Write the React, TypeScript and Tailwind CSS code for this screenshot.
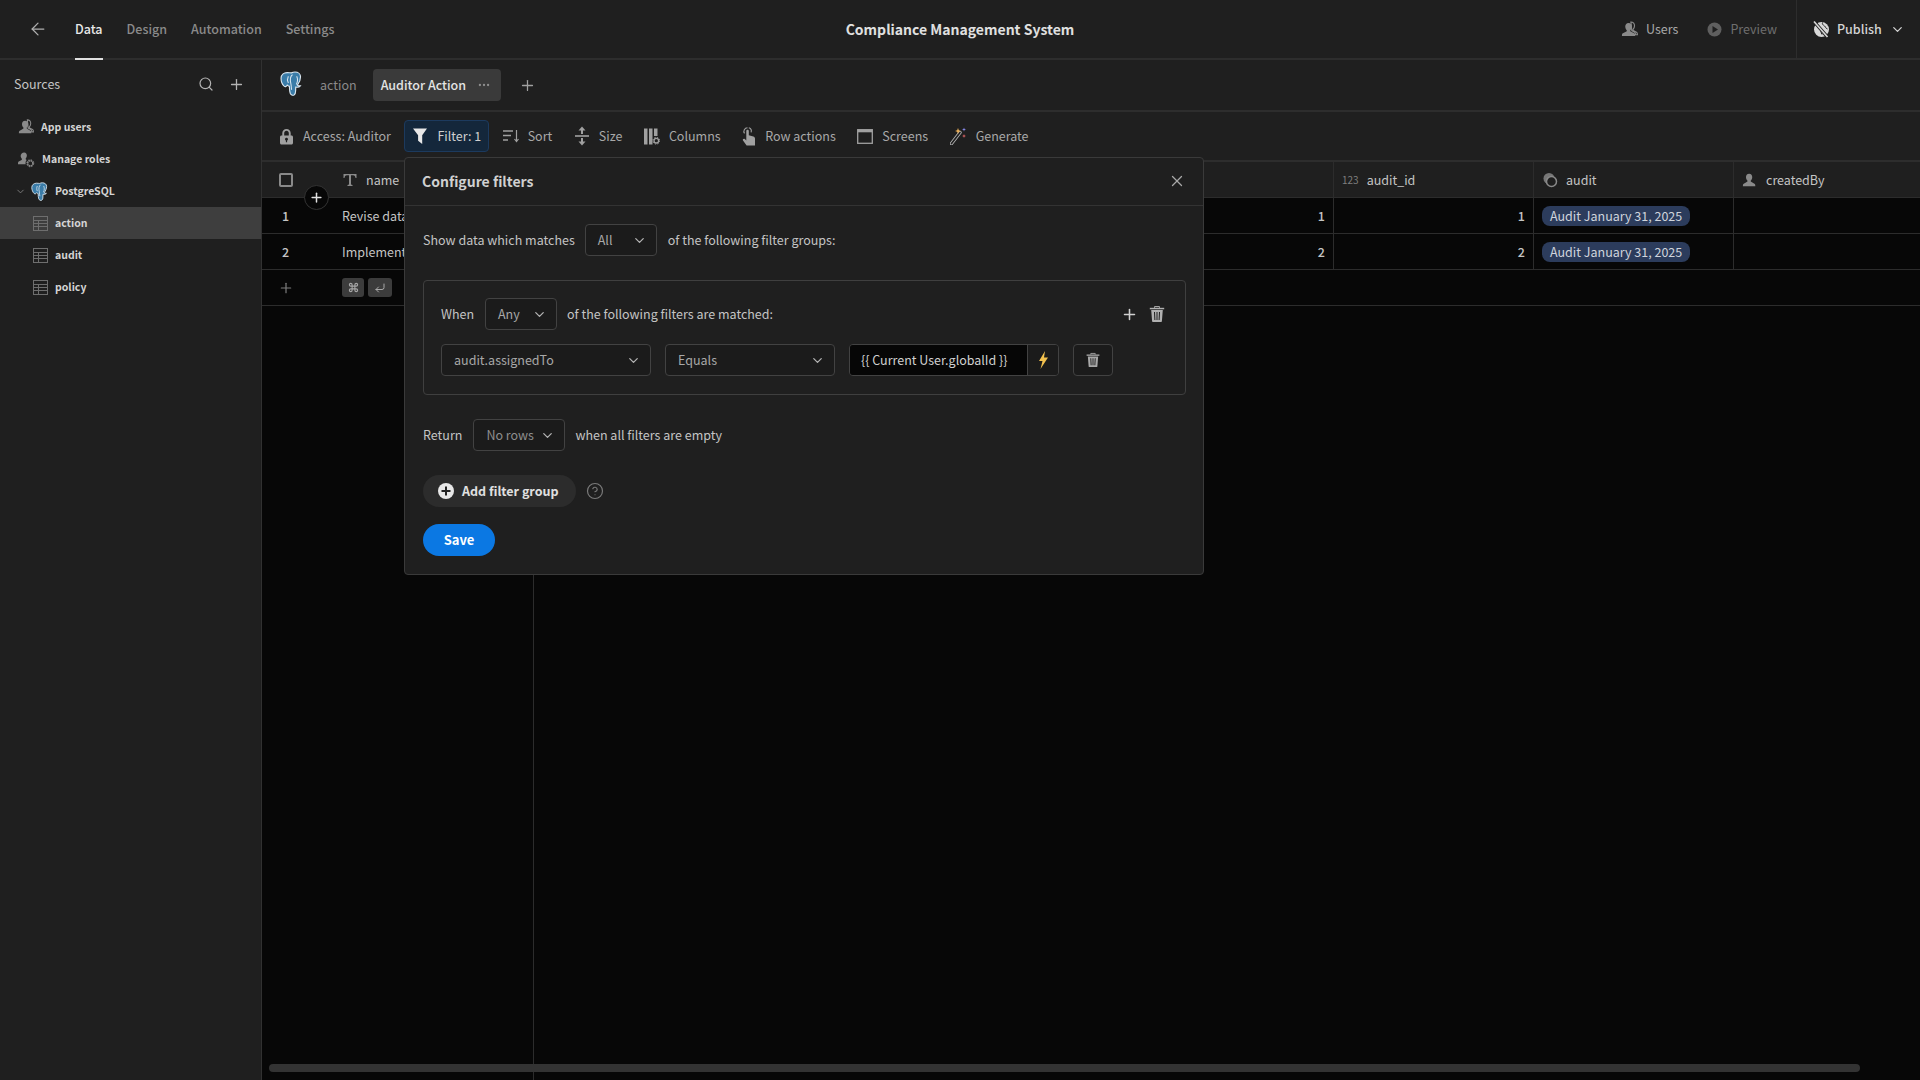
import { ArrowLeft, ChevronDown, CircleHelp, Command, CornerDownLeft, Ellipsis, Plus, Search, X } from "lucide-react"
import type { ReactNode } from "react"

const ROWS = [
	{ id: 1, name: "Revise data retention policy" },
	{ id: 2, name: "Implement access review process" },
]

function PostgresIcon({ size = 22 }: { size?: number }) {
	return (
		<svg width={size} height={size} viewBox="0 0 24 24" className="shrink-0">
			<path
				d="M7 1.5C3.5 1.5 1 3.800 1 7c0 2.800 1.300 6 3 7.500 1.200 1 2.300.3 3-1 .7.6 1.300 1 2 1.100.1 2.500.2 5 .8 6.700.7 1.700 2.300 2.400 3.700 1.700 1.300-.7 1.500-2.200 1.500-4l.1-3.500c2 .3 3.600-.1 4.400-1.200-1.300.1-2.300-.1-2.800-.7 1.600-2 3-5.500 3-8.100 0-2.700-2.300-4.500-5.300-4.500-1.400 0-2.500.3-3.400.8C9.800 1.800 8.500 1.500 7 1.500z"
				fill="#3a7ca8"
				stroke="#dbe7f0"
				strokeWidth="1.100"
			/>
			<path
				d="M8 5c-1 2-1 4.500 0 6.500M12 3.500c-2 1.500-2.500 5-1.500 9 .4 2 .2 4 .7 5.500M16 5c1 2 1.200 5-.3 8"
				fill="none"
				stroke="#dbe7f0"
				strokeWidth="1"
			/>
		</svg>
	)
}

function TableIcon() {
	return (
		<svg width="15" height="15" viewBox="0 0 15 15" fill="none" stroke="#6e6e6e" strokeWidth="1" className="shrink-0">
			<rect x="0.500" y="0.500" width="14" height="14" />
			<path d="M0.500 4.500h14M0.500 7.500h14M0.500 10.500h14M5.500 4.500v10" />
		</svg>
	)
}

function PersonIcon({ size = 16, color = "#8a8a8a", second = false }: { size?: number; color?: string; second?: boolean }) {
	return (
		<svg width={size} height={size} viewBox="0 0 18 18" fill={color} className="shrink-0">
			{second && <path d="M10.500 1c2.400 0 4 1.800 3.800 4.300-.1 1.400-.8 2.700-1.500 3.500-.3.400-.2 1 .2 1.200l3.400 1.900c.7.400 1 1.100 1 2.600h-2c0-1.500-.4-2.200-1-2.600l-3-1.700z" fill="none" stroke={color} strokeWidth="1.200" />}
			<path d="M8 2c2.300 0 3.700 1.800 3.500 4.200-.1 1.400-.8 2.800-1.500 3.500-.4.500-.2 1.100.3 1.400l3.700 2c.7.400 1 1.100 1 2.900H1c0-1.800.3-2.500 1-2.900l3.700-2c.5-.3.700-.9.300-1.400-.7-.7-1.400-2.100-1.500-3.500C4.300 3.800 5.700 2 8 2z" />
		</svg>
	)
}

function RolesIcon() {
	return (
		<svg width="17" height="17" viewBox="0 0 18 18" fill="#8a8a8a" className="shrink-0">
			<path d="M6.500 1.500c1.900 0 3 1.500 2.900 3.500-.1 1.200-.7 2.300-1.200 2.900-.3.400-.2.900.2 1.200l.8.400c-1 1-1.400 2.500-1.100 4.500H0c0-1.800.2-2.400.8-2.800l3-1.700c.4-.3.600-.8.300-1.200-.6-.6-1.200-1.700-1.300-2.900C2.700 3 4.600 1.500 6.500 1.500z" />
			<circle cx="13" cy="13" r="2.800" fill="none" stroke="#8a8a8a" strokeWidth="1.600" strokeDasharray="1.700 .5" />
			<circle cx="13" cy="13" r="3.700" fill="none" stroke="#8a8a8a" strokeWidth="1" strokeDasharray="1.500 1.400" />
		</svg>
	)
}

function PublishIcon() {
	return (
		<svg width="18" height="18" viewBox="0 0 18 18" fill="none" className="shrink-0">
			<circle cx="9.500" cy="9.500" r="7.500" fill="#d8d8d8" />
			<path d="M5 3.500c1 2 .5 3.500 2.500 5s1 3.500 2.500 6M10.500 2.500c-.5 1.500.5 2.500 2 3.500s1 2.500 3 3" stroke="#1f1f1f" strokeWidth="1" />
			<path d="M2 1.500l13.500 15.500" stroke="#1f1f1f" strokeWidth="3.400" />
			<path d="M2 1.500l13.500 15.500" stroke="#d8d8d8" strokeWidth="1.600" />
		</svg>
	)
}

function TrashIcon({ color = "#a8a8a8", size = 16 }: { color?: string; size?: number }) {
	return (
		<svg width={size} height={size} viewBox="0 0 18 18" fill={color} className="shrink-0">
			<path d="M6.500 2.800V1.600h5v1.200" fill="none" stroke={color} strokeWidth="1" />
			<path d="M1.800 2.800h14.400v1.500H1.800z" />
			<path fillRule="evenodd" d="M3.200 5h11.600l-.9 11.300c0 .5-.5.700-1 .7H5.100c-.5 0-1-.2-1-.7zM6 7l.4 8h1L7 7zm2.500 0v8h1V7zM11 7l-.4 8h1L12 7z" />
		</svg>
	)
}

function ToolIcon({ name }: { name: string }) {
	if (name === "lock") {
		return (
			<svg width="15" height="17" viewBox="0 0 15 17" fill="#a0a0a0" className="shrink-0">
				<path fillRule="evenodd" d="M7.500 1C5 1 3.300 2.700 3.300 5v2.500H2.500C1.700 7.500 1 8.200 1 9v6c0 .8.700 1.500 1.500 1.500h10c.8 0 1.500-.7 1.500-1.500V9c0-.8-.7-1.500-1.500-1.500h-.8V5C11.700 2.700 10 1 7.500 1zm0 1.800c1.400 0 2.300 1 2.300 2.300v2.400H5.200V5.100c0-1.300.9-2.300 2.300-2.300zm0 7a1.400 1.400 0 0 1 .6 2.700v1.700H6.900v-1.700a1.400 1.400 0 0 1 .6-2.700z" />
			</svg>
		)
	}
	if (name === "filter") {
		return (
			<svg width="16" height="18" viewBox="0 0 16 18" fill="#e8e8e8" className="shrink-0">
				<path d="M1 1.500h14l-4.800 6.800V17l-4.100-3.200V8.300z" />
			</svg>
		)
	}
	if (name === "sort") {
		return (
			<svg width="16" height="14" viewBox="0 0 16 14" fill="none" stroke="#a0a0a0" className="shrink-0">
				<path d="M0 2h10M0 6.500h8M0 11h5" strokeWidth="1.700" />
				<path d="M13.500 1v11M11.500 10l2 2.500 2-2.500" strokeWidth="1.200" />
			</svg>
		)
	}
	if (name === "size") {
		return (
			<svg width="16" height="20" viewBox="0 0 16 20" fill="#a0a0a0" className="shrink-0">
				<path d="M8 .500l3.500 4H9v3.500H7V4.500H4.500zM8 19.500l3.500-4H9V12H7v3.500H4.500z" />
				<rect x="1" y="9.200" width="14" height="1.600" />
			</svg>
		)
	}
	if (name === "columns") {
		return (
			<svg width="16" height="17" viewBox="0 0 16 17" fill="#a0a0a0" className="shrink-0">
				<rect x="0" y="0.500" width="3.500" height="16" />
				<rect x="5" y="0.500" width="3.500" height="16" />
				<path d="M10 .5h3.500v7.500H10z" />
				<circle cx="12.300" cy="12.700" r="2.300" fill="none" stroke="#a0a0a0" strokeWidth="1.300" />
				<circle cx="12.300" cy="12.700" r="3.400" fill="none" stroke="#a0a0a0" strokeWidth="1" strokeDasharray="1.400 1.300" />
			</svg>
		)
	}
	if (name === "row") {
		return (
			<svg width="14" height="20" viewBox="0 0 14 20" className="shrink-0">
				<path d="M5.500 1.800a3.600 3.600 0 0 0-3 5.600M6.800 1.800a3.600 3.600 0 0 1 2.300 4.500" fill="none" stroke="#a0a0a0" strokeWidth="1.100" />
				<path d="M4.300 4.800c0-1.500 2.500-1.500 2.500 0v4.400l4.500 1.200c1 .3 1.700 1.100 1.700 2.200V19.500H4.600L1 14.500c-.8-1.200.8-2.500 1.800-1.500l1.500 1.500z" fill="#a0a0a0" />
			</svg>
		)
	}
	if (name === "screens") {
		return (
			<svg width="16" height="15" viewBox="0 0 16 15" className="shrink-0">
				<rect x="0.700" y="0.700" width="14.600" height="13.600" fill="none" stroke="#a0a0a0" strokeWidth="1.300" />
				<rect x="0.700" y="0.700" width="14.600" height="2.600" fill="#a0a0a0" />
			</svg>
		)
	}
	return (
		<svg width="17" height="18" viewBox="0 0 17 18" className="shrink-0">
			<path d="M1.500 16.500L10 5.500" stroke="#b5b5b5" strokeWidth="3.400" strokeLinecap="round" />
			<path d="M1.500 16.500L10 5.500" stroke="#1f1f1f" strokeWidth="1.700" strokeLinecap="round" />
			<path d="M8 1l.8 2.200L11 4 8.800 4.800 8 7 7.200 4.800 5 4l2.200-.8z" fill="#f0b35a" />
			<path d="M14 .5l.5 1.500 1.500.5-1.500.5-.5 1.500-.5-1.500-1.500-.5 1.500-.5z" fill="#8b8cf0" />
			<path d="M14 7l.5 1.500 1.500.5-1.500.5L14 11l-.5-1.500L12 9l1.500-.5z" fill="#e86a6a" />
		</svg>
	)
}

function ToolItem({ icon, label, active }: { icon: string; label: string; active?: boolean }) {
	return (
		<div
			className={`flex h-8 items-center gap-[9px] rounded-[4px] border px-[7px] ${
				active ? "border-[#1c3a5e] bg-[#14273b] text-[#d0d0d0]" : "border-transparent text-[#a8a8a8]"
			}`}
		>
			<ToolIcon name={icon} />
			<span>{label}</span>
		</div>
	)
}

function SidebarItem({ icon, label, active, indent }: { icon: ReactNode; label: string; active?: boolean; indent: string }) {
	return (
		<div className={`flex h-8 items-center text-[10.500px] font-semibold text-[#d4d4d4] ${indent} ${active ? "bg-[#3e3e3e]" : ""}`}>
			{icon}
			<span>{label}</span>
		</div>
	)
}

function HeaderCell({ icon, label, width }: { icon: ReactNode; label: string; width: string }) {
	return (
		<div className={`flex h-full shrink-0 items-center gap-[8px] border-r border-[#2c2c2c] pl-[8px] text-[#c4c4c4] ${width}`}>
			{icon}
			<span>{label}</span>
		</div>
	)
}

function Select({ label, width, muted }: { label: string; width: string; muted?: boolean }) {
	return (
		<div
			className={`flex h-8 shrink-0 items-center justify-between rounded-[4px] border border-[#424242] bg-[#1b1b1b] pl-[12px] pr-[9px] ${width} ${
				muted ? "text-[#8e8e8e]" : "text-[#a8a8a8]"
			}`}
		>
			<span>{label}</span>
			<ChevronDown size={15} color="#b4b4b4" strokeWidth={2} />
		</div>
	)
}

function FilterDialog() {
	return (
		<div className="absolute left-[142px] top-[97px] w-[800px] rounded-[4px] border border-[#3a3a3a] bg-[#1f1f1f] text-[#c4c4c4]">
			<div className="flex h-[48px] items-center justify-between border-b border-[#333333] pb-[2px] pl-[17px] pr-[17px]">
				<span className="text-[14px] font-semibold text-[#d0d0d0]">Configure filters</span>
				<X size={18} color="#a8a8a8" strokeWidth={1.700} />
			</div>
			<div className="flex flex-col px-[18px] pt-[18px]">
				<div className="flex items-center gap-[10px]">
					<span>Show data which matches</span>
					<Select label="All" width="w-[72px] mr-[1px]" />
					<span>of the following filter groups:</span>
				</div>
				<div className="mt-[24px] flex h-[115px] w-[763px] flex-col gap-[14px] rounded-[4px] border border-[#3f3f3f] px-[17px] pt-[17px]">
					<div className="flex items-center">
						<span className="w-[44px]">When</span>
						<Select label="Any" width="w-[72px]" />
						<span className="ml-[10px] flex-1">of the following filters are matched:</span>
						<Plus size={17} color="#d0d0d0" strokeWidth={2.200} />
						<span className="ml-[10px] mr-[2px]">
							<TrashIcon color="#b0b0b0" size={18} />
						</span>
					</div>
					<div className="flex items-center">
						<Select label="audit.assignedTo" width="w-[210px]" />
						<div className="ml-[14px]">
							<Select label="Equals" width="w-[170px]" />
						</div>
						<div className="ml-[14px] flex h-8 w-[210px] overflow-hidden rounded-[4px] border border-[#424242]">
							<div className="flex w-[178px] items-center border-r border-[#424242] bg-[#060606] pl-[11px] text-[#d0d0d0]">{"{{ Current User.globalId }}"}</div>
							<div className="flex flex-1 items-center justify-center bg-[#1b1b1b]">
								<svg width="11" height="18" viewBox="0 0 11 18" fill="#f2c14e">
									<path d="M7 0L1 10h3.500L2.500 18 10 6.500H6z" />
								</svg>
							</div>
						</div>
						<div className="ml-[14px] flex h-8 w-[40px] items-center justify-center rounded-[4px] border border-[#424242] bg-[#1b1b1b]">
							<TrashIcon />
						</div>
					</div>
				</div>
				<div className="mt-[24px] flex items-center">
					<span>Return</span>
					<div className="ml-[11px]">
						<Select label="No rows" width="w-[92px]" muted />
					</div>
					<span className="ml-[10px]">when all filters are empty</span>
				</div>
				<div className="mt-[24px] flex items-center">
					<div className="flex h-[32px] w-[153px] items-center gap-[8px] rounded-full bg-[#2c2c2c] pl-[15px] font-semibold text-[#e0e0e0]">
						<svg width="16" height="16" viewBox="0 0 16 16" className="shrink-0">
							<circle cx="8" cy="8" r="8" fill="#e8e8e8" />
							<path d="M8 3.500v9M3.500 8h9" stroke="#222222" strokeWidth="2" />
						</svg>
						<span>Add filter group</span>
					</div>
					<span className="ml-[10px]">
						<CircleHelp size={18} color="#7a7a7a" strokeWidth={1.600} />
					</span>
				</div>
				<div className="mb-[18px] mt-[17px] flex h-8 w-[72px] items-center justify-center rounded-full bg-[#0b78e3] text-[13px] font-semibold text-white">Save</div>
			</div>
		</div>
	)
}

export default function App() {
	return (
		<div className="flex h-[1080px] w-[1920px] flex-col overflow-hidden bg-[#1f1f1f] font-['Noto_Sans_CJK_SC','Liberation_Sans',sans-serif] text-[12.500px] leading-[18px]">
			{/* top bar */}
			<header className="flex h-[60px] shrink-0 items-stretch border-b-2 border-[#2d2d2d]">
				<div className="flex flex-1 items-center">
					<ArrowLeft size={20} color="#b0b0b0" strokeWidth={1.500} className="ml-[28px]" />
					<nav className="ml-[27px] flex h-full items-stretch gap-[24px] font-medium text-[#8a8a8a]">
						<div className="mb-[-2px] flex items-center border-b-2 border-[#e0e0e0] text-[#e8e8e8]">Data</div>
						<div className="flex items-center">Design</div>
						<div className="flex items-center">Automation</div>
						<div className="flex items-center">Settings</div>
					</nav>
				</div>
				<div className="flex items-center text-[14px] font-semibold text-[#e0e0e0]">Compliance Management System</div>
				<div className="flex flex-1 items-center justify-end">
					<div className="flex items-center gap-[8px] text-[#a8a8a8]">
						<PersonIcon second size={17} />
						<span>Users</span>
					</div>
					<div className="ml-[29px] flex items-center gap-[8px] text-[#6e6e6e]">
						<svg width="15" height="15" viewBox="0 0 15 15" className="shrink-0">
							<circle cx="7.500" cy="7.500" r="7" fill="#5f5f5f" />
							<path d="M5.500 4l5.500 3.500L5.500 11z" fill="#1f1f1f" />
						</svg>
						<span>Preview</span>
					</div>
					<div className="ml-[19px] flex h-full w-[124px] items-center gap-[7px] border-l border-[#2d2d2d] pl-[15px] font-medium text-[#d4d4d4]">
						<PublishIcon />
						<span>Publish</span>
						<ChevronDown size={15} color="#d4d4d4" strokeWidth={2} className="ml-[1px]" />
					</div>
				</div>
			</header>

			<div className="flex min-h-0 flex-1">
				{/* sources */}
				<aside className="flex w-[262px] shrink-0 flex-col border-r border-[#313131]">
					<div className="flex h-[48px] items-center justify-between pl-[14px] pr-[16px] text-[#c4c4c4]">
						<span>Sources</span>
						<div className="flex items-center gap-[14px]">
							<Search size={16} color="#b4b4b4" strokeWidth={1.800} />
							<Plus size={17} color="#b4b4b4" strokeWidth={1.800} />
						</div>
					</div>
					<div className="mt-[3px] flex flex-col">
						<SidebarItem indent="pl-[18px] gap-[7px]" icon={<PersonIcon second />} label="App users" />
						<SidebarItem indent="pl-[18px] gap-[7px]" icon={<RolesIcon />} label="Manage roles" />
						<SidebarItem
							indent="pl-[15px] gap-[5px]"
							icon={
								<>
									<ChevronDown size={11} color="#7e7e7e" strokeWidth={2} />
									<PostgresIcon size={19} />
								</>
							}
							label="PostgreSQL"
						/>
						<SidebarItem indent="pl-[33px] gap-[7px]" icon={<TableIcon />} label="action" active />
						<SidebarItem indent="pl-[33px] gap-[7px]" icon={<TableIcon />} label="audit" />
						<SidebarItem indent="pl-[33px] gap-[7px]" icon={<TableIcon />} label="policy" />
					</div>
				</aside>

				<main className="relative flex min-w-0 flex-1 flex-col">
					{/* view tabs */}
					<div className="flex h-[52px] shrink-0 items-center border-b-2 border-[#2d2d2d] pl-[18px]">
						<span className="mb-[3px]">
							<PostgresIcon size={25} />
						</span>
						<span className="ml-[15px] text-[#8a8a8a]">action</span>
						<div className="ml-[16px] flex h-8 w-[128px] items-center justify-between rounded-[4px] bg-[#3a3a3a] pl-[8px] pr-[10px] font-medium text-[#e4e4e4]">
							<span>Auditor Action</span>
							<Ellipsis size={14} color="#8e8e8e" />
						</div>
						<span className="ml-[18px]">
							<Plus size={17} color="#a0a0a0" strokeWidth={1.800} />
						</span>
					</div>

					{/* toolbar */}
					<div className="flex h-[50px] shrink-0 items-center gap-[5.500px] border-b-2 border-[#2d2d2d] pl-[9px]">
						<ToolItem icon="lock" label="Access: Auditor" />
						<ToolItem icon="filter" label="Filter: 1" active />
						<ToolItem icon="sort" label="Sort" />
						<ToolItem icon="size" label="Size" />
						<ToolItem icon="columns" label="Columns" />
						<ToolItem icon="row" label="Row actions" />
						<ToolItem icon="screens" label="Screens" />
						<ToolItem icon="generate" label="Generate" />
					</div>

					{/* table */}
					<div className="flex min-h-0 flex-1 overflow-hidden bg-[#070707]">
						<div className="flex w-[272px] shrink-0 flex-col border-r border-[#2c2c2c]">
							<div className="flex h-[36px] items-center border-b border-[#2c2c2c] bg-[#1f1f1f] text-[#c4c4c4]">
								<div className="flex w-[73px] pl-[17px]">
									<span className="size-[14px] rounded-[2px] border-2 border-[#8a8a8a]" />
								</div>
								<div className="flex items-center gap-[9px] pl-[8px]">
									<svg width="14" height="14" viewBox="0 0 14 14" fill="#8a8a8a" className="shrink-0">
										<path d="M.5 1h13v4h-1c-.2-1.700-.7-2.800-2.500-2.800H8v9.300l1.500.5v1H4.500v-1l1.500-.5V2.200H4C2.200 2.200 1.700 3.300 1.500 5h-1z" />
									</svg>
									<span>name</span>
								</div>
							</div>
							{ROWS.map((row) => (
								<div key={row.id} className="flex h-[36px] items-center border-b border-[#2c2c2c] text-[#c4c4c4]">
									<div className="w-[73px] pr-[47px] pl-[20px] text-center font-medium">{row.id}</div>
									<div className="min-w-0 flex-1 truncate pl-[7px]">{row.name}</div>
								</div>
							))}
							<div className="flex h-[36px] items-center border-b border-[#2c2c2c]">
								<div className="flex w-[73px] pl-[16px]">
									<Plus size={16} color="#7e7e7e" strokeWidth={1.800} />
								</div>
								<div className="flex gap-[4px] pl-[7px]">
									<span className="flex h-[19px] w-[22px] items-center justify-center rounded-[3px] bg-[#3c3c3c]">
										<Command size={11} color="#a8a8a8" strokeWidth={2.400} />
									</span>
									<span className="flex h-[19px] w-[24px] items-center justify-center rounded-[3px] bg-[#3c3c3c]">
										<CornerDownLeft size={12} color="#a8a8a8" strokeWidth={2} />
									</span>
								</div>
							</div>
						</div>
						<div className="flex min-w-0 flex-1 flex-col">
							<div className="flex h-[36px] shrink-0 items-center border-b border-[#2c2c2c] bg-[#1f1f1f]">
								<div className="h-full w-[800px] shrink-0 border-r border-[#2c2c2c]" />
								<HeaderCell width="w-[200px]" icon={<span className="text-[10px] text-[#7e7e7e]">123</span>} label="audit_id" />
								<HeaderCell
									width="w-[200px]"
									icon={
										<svg width="16" height="16" viewBox="0 0 16 16" className="shrink-0">
											<circle cx="7" cy="6.500" r="5.500" fill="#777777" />
											<circle cx="9.500" cy="9.500" r="5" fill="#1f1f1f" stroke="#8a8a8a" strokeWidth="1.500" />
										</svg>
									}
									label="audit"
								/>
								<HeaderCell width="w-[200px]" icon={<PersonIcon />} label="createdBy" />
							</div>
							{ROWS.map((row) => (
								<div key={row.id} className="flex h-[36px] shrink-0 items-center border-b border-[#2c2c2c] text-[#c4c4c4]">
									<div className="flex h-full w-[600px] shrink-0" />
									<div className="flex h-full w-[200px] shrink-0 items-center justify-end border-r border-[#2c2c2c] pr-[8px] font-medium">{row.id}</div>
									<div className="flex h-full w-[200px] shrink-0 items-center justify-end border-r border-[#2c2c2c] pr-[8px] font-medium">{row.id}</div>
									<div className="flex h-full w-[200px] shrink-0 items-center border-r border-[#2c2c2c] pl-[8px]">
										<span className="flex h-[20px] items-center rounded-[8px] bg-[#2c3c5c] px-[8px] text-[#cfd4dc]">Audit January 31, 2025</span>
									</div>
									<div className="h-full w-[200px] shrink-0 border-r border-[#2c2c2c]" />
								</div>
							))}
							<div className="h-[36px] shrink-0 border-b border-[#2c2c2c]" />
						</div>
					</div>

					{/* add column */}
					<div className="absolute left-[42px] top-[125px] flex size-[25px] items-center justify-center rounded-full border border-[#333333] bg-[#070707]">
						<Plus size={15} color="#e0e0e0" strokeWidth={2.400} />
					</div>

					{/* horizontal scrollbar */}
					<div className="absolute bottom-[8px] left-[7px] h-[8px] w-[1591px] rounded-full bg-[#333333]" />

					<FilterDialog />
				</main>
			</div>
		</div>
	)
}
